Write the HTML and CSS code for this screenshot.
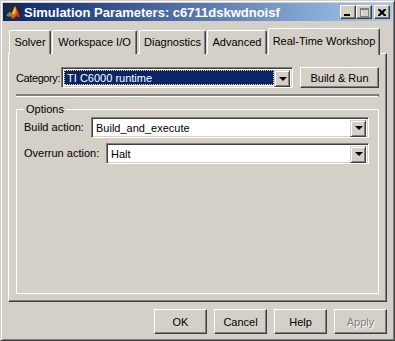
FILE: index.html
```html
<!DOCTYPE html>
<html lang="en">
<head>
  <meta charset="UTF-8" />
  <title>Simulation Parameters: c6711dskwdnoisf</title>
  <link rel="stylesheet" href="styles.css">
</head>
<body>
  <div class="window">
    <div class="titlebar">
      <svg class="app-icon" width="16" height="16" viewBox="0 0 16 16">
        <rect width="16" height="16" fill="#1c2a44"/>
        <polygon points="1,11 5,8 7,9 10,2 13,8 15,13 11,12 8,15 5,12" fill="#e8561c"/>
        <polygon points="7,9 10,2 11,7 9,11" fill="#f8c020"/>
        <polygon points="1,11 5,8 6,11 4,13" fill="#3aa060"/>
        <polygon points="11,12 15,13 13,8" fill="#c0301c"/>
      </svg>
      <span class="title">Simulation Parameters: c6711dskwdnoisf</span>
      <div class="caption-buttons">
        <div class="cap-btn">
          <svg width="8" height="7" viewBox="0 0 8 7"><rect x="0" y="5" width="6" height="2" fill="#000"/></svg>
        </div>
        <div class="cap-btn disabled">
          <svg width="9" height="9" viewBox="0 0 9 9">
            <rect x="1" y="1" width="8" height="8" fill="none" stroke="#fff"/>
            <rect x="0.5" y="0.5" width="8" height="8" fill="none" stroke="#808080"/>
            <rect x="0" y="1" width="9" height="1" fill="#808080"/>
          </svg>
        </div>
        <div class="cap-btn close">
          <svg width="8" height="7" viewBox="0 0 8 7">
            <path d="M0 0h2l2 2 2-2h2v1l-2.5 2.5 2.5 2.5v1h-2l-2-2-2 2h-2v-1l2.5-2.5-2.5-2.5z" fill="#000"/>
          </svg>
        </div>
      </div>
    </div>

    <div class="content">
      <div class="tabs">
        <div class="tab tab-solver">Solver</div>
        <div class="tab tab-workspace">Workspace I/O</div>
        <div class="tab tab-diag">Diagnostics</div>
        <div class="tab tab-adv">Advanced</div>
        <div class="tab active">Real-Time Workshop</div>
      </div>

      <div class="panel">
        <div class="category-row">
          <span class="label">Category:</span>
          <div class="combo combo-category focused">
            <div class="combo-text"><span class="selected-text">TI C6000 runtime</span></div>
            <div class="combo-arrow"><span class="tri"></span></div>
          </div>
          <div class="button build-run">Build &amp; Run</div>
        </div>

        <div class="separator"></div>

        <fieldset class="options">
          <legend>Options</legend>
          <div class="field-row">
            <span class="label">Build action:</span>
            <div class="combo">
              <div class="combo-text">Build_and_execute</div>
              <div class="combo-arrow"><span class="tri"></span></div>
            </div>
          </div>
          <div class="field-row">
            <span class="label">Overrun action:</span>
            <div class="combo">
              <div class="combo-text">Halt</div>
              <div class="combo-arrow"><span class="tri"></span></div>
            </div>
          </div>
        </fieldset>
      </div>

      <div class="dialog-buttons">
        <div class="button">OK</div>
        <div class="button">Cancel</div>
        <div class="button">Help</div>
        <div class="button disabled">Apply</div>
      </div>
    </div>
  </div>
</body>
</html>
```

FILE: styles.css
```css
* {
  box-sizing: border-box;
}

body {
  margin: 0;
  padding: 0;
  background: #d4d0c8;
  font-family: "Liberation Sans", Arial, sans-serif;
  font-size: 11px;
  color: #000;
}

.window {
  width: 395px;
  height: 341px;
  background: #d4d0c8;
  border: 1px solid;
  border-color: #d4d0c8 #404040 #404040 #d4d0c8;
  box-shadow: inset 1px 1px #fff, inset -1px -1px #808080;
  padding: 2px;
  display: flex;
  flex-direction: column;
}

/* title bar */
.titlebar {
  height: 18px;
  background: linear-gradient(to right, #0a246a, #a6caf0);
  display: flex;
  align-items: center;
  padding: 0 2px 0 2px;
}

.app-icon {
  flex: none;
  margin-right: 3px;
}

.title {
  color: #fff;
  font-weight: bold;
  font-size: 13px;
  flex: 1;
  white-space: nowrap;
}

.caption-buttons {
  display: flex;
}

.cap-btn {
  width: 16px;
  height: 14px;
  background: #d4d0c8;
  border: 1px solid;
  border-color: #fff #404040 #404040 #fff;
  box-shadow: inset -1px -1px #808080;
  display: flex;
  align-items: center;
  justify-content: center;
}

.cap-btn.close {
  margin-left: 2px;
}

/* body */
.content {
  flex: 1;
  display: flex;
  flex-direction: column;
  padding: 5px 3px 0 5px;
}

.tabs {
  display: flex;
  align-items: flex-end;
  height: 27px;
  padding-left: 1px;
  position: relative;
  z-index: 1;
}

.tab {
  height: 24px;
  margin-bottom: -1px;
  padding: 5px 0 0 0;
  text-align: center;
  background: #d4d0c8;
  border: 1px solid;
  border-bottom: none;
  border-color: #fff #404040 #fff #fff;
  border-radius: 2px 2px 0 0;
  box-shadow: inset -1px 0 #808080;
  white-space: nowrap;
  margin-right: 1px;
}

.tab-solver { width: 42px; }
.tab-workspace { width: 85px; margin-right: 2px; }
.tab-diag { width: 67px; }
.tab-adv { width: 60px; }

.tab.active {
  width: 112px;
  height: 27px;
  margin-bottom: -2px;
  padding-top: 6px;
}

.panel {
  height: 249px;
  width: 379px;
  border: 1px solid;
  border-color: #fff #404040 #404040 #fff;
  box-shadow: inset -1px -1px #808080;
  padding: 13px 0 0 7px;
}

.category-row {
  display: flex;
  align-items: center;
  width: 363px;
  height: 21px;
}

.category-row .label {
  white-space: nowrap;
  margin-right: 1px;
  letter-spacing: -0.4px;
}

.combo {
  height: 21px;
  background: #fff;
  border: 1px solid;
  border-color: #808080 #fff #fff #808080;
  box-shadow: inset 1px 1px #404040, inset -1px -1px #d4d0c8;
  display: flex;
  padding: 2px;
}

.combo-text {
  flex: 1;
  padding: 2px 0 0 2px;
  white-space: nowrap;
}

.combo-category {
  flex: 1;
}

.combo.focused .combo-text {
  background: #0a246a;
  color: #fff;
  outline: 1px dotted #f0e070;
  outline-offset: -1px;
  padding-left: 3px;
}

.combo-arrow {
  width: 16px;
  height: 17px;
  background: #d4d0c8;
  border: 1px solid;
  border-color: #d4d0c8 #404040 #404040 #d4d0c8;
  box-shadow: inset 1px 1px #fff, inset -1px -1px #808080;
  display: flex;
  align-items: center;
  justify-content: center;
}

.tri {
  width: 0;
  height: 0;
  border-left: 4px solid transparent;
  border-right: 4px solid transparent;
  border-top: 4px solid #000;
  margin-left: 1px;
}

.button {
  background: #d4d0c8;
  border: 1px solid;
  border-color: #fff #404040 #404040 #fff;
  box-shadow: inset -1px -1px #808080;
  display: flex;
  align-items: center;
  justify-content: center;
  white-space: nowrap;
}

.build-run {
  flex: none;
  width: 79px;
  height: 21px;
  margin-left: 7px;
}

.separator {
  margin-top: 6px;
  width: 363px;
  height: 3px;
  border-top: 2px solid #808080;
  border-bottom: 1px solid #fff;
  border-right: 1px solid #404040;
}

.options {
  margin: 6px 0 0 0;
  width: 363px;
  height: 191px;
  border: 1px solid #fff;
  padding: 2px 0 0 7px;
}

.options legend {
  padding: 0 2px;
}

.field-row {
  display: flex;
  align-items: center;
  height: 20px;
  margin-bottom: 6px;
}

.field-row .combo {
  flex: 1;
  margin-right: 9px;
}

.field-row .label {
  width: 67px;
}

.field-row + .field-row .label {
  width: 82px;
}

.dialog-buttons {
  display: flex;
  justify-content: flex-end;
  gap: 7px;
  margin-top: 7px;
  padding-right: 2px;
}

.dialog-buttons .button {
  width: 53px;
  height: 25px;
}

.button.disabled {
  color: #808080;
  text-shadow: 1px 1px #fff;
}
```
